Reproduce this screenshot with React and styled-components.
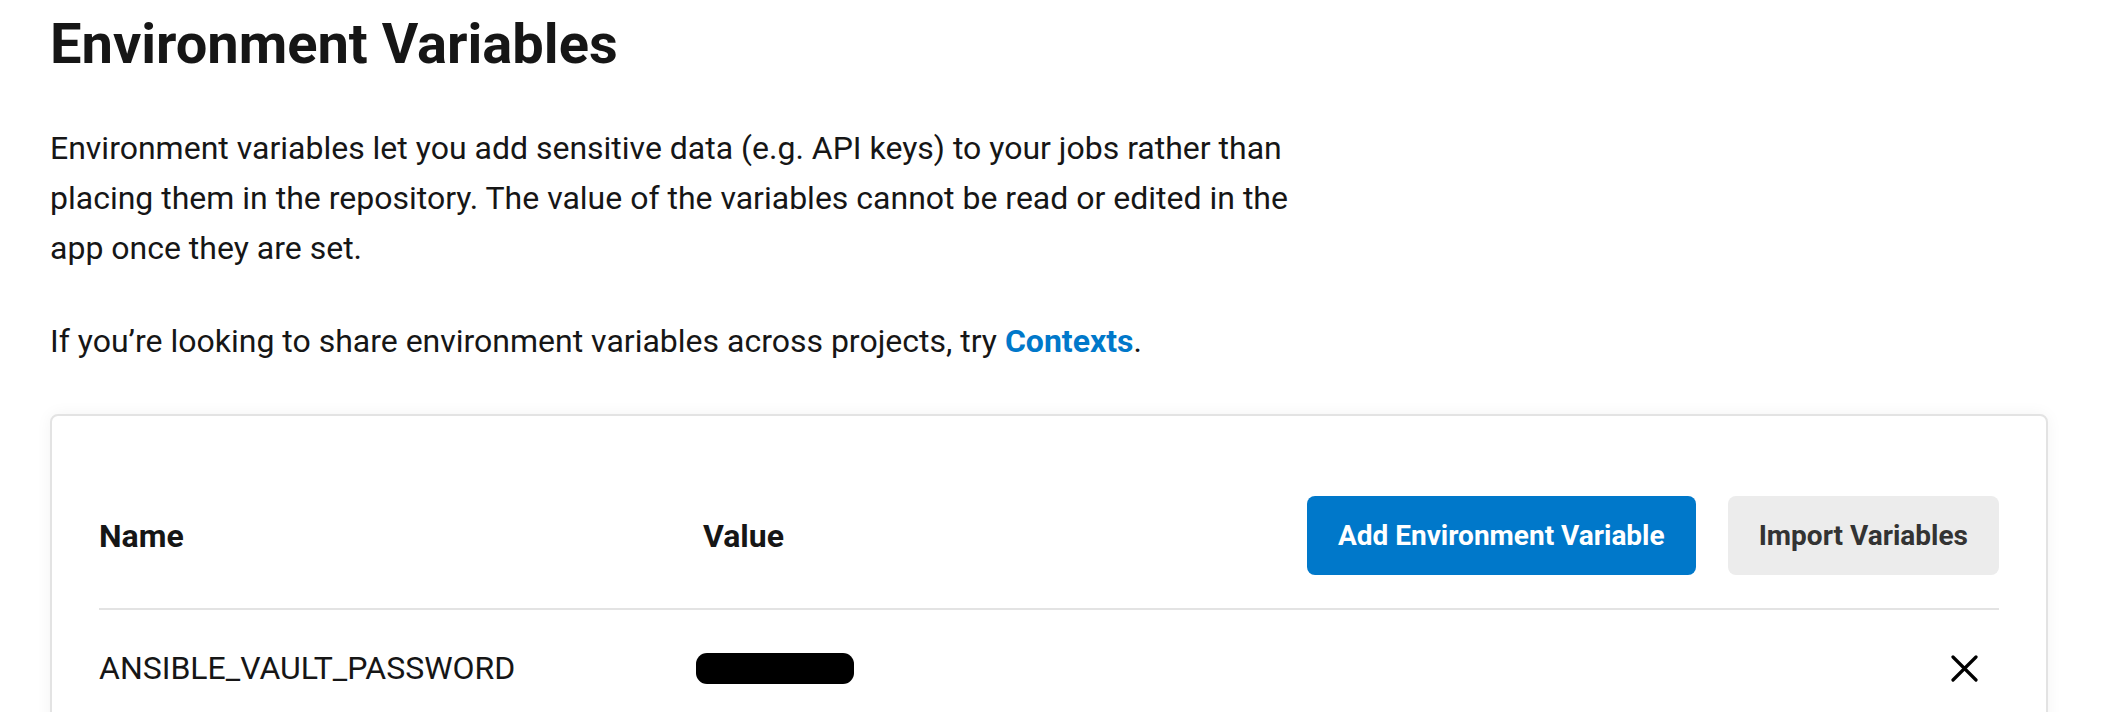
import React from 'react';
import styled, {createGlobalStyle} from 'styled-components';

const GlobalStyle = createGlobalStyle`
  html, body {
    margin: 0;
    padding: 0;
    background: #ffffff;
  }
  body {
    font-family: Roboto, "Liberation Sans", Arial, sans-serif;
    color: #161616;
  }
`;

const variables = [
    {name: 'ANSIBLE_VAULT_PASSWORD'}
];

const CloseIcon = () => (
    <svg width="27" height="27" viewBox="0 0 27 27" fill="none">
        <path d="M2 2L25 25M25 2L2 25" stroke="#000" strokeWidth="3.2" strokeLinecap="round"/>
    </svg>
);

export default function App() {
    return (
        <Page>
            <GlobalStyle/>
            <Title>Environment Variables</Title>
            <Paragraph>
                Environment variables let you add sensitive data (e.g. API keys) to your jobs rather than
                placing them in the repository. The value of the variables cannot be read or edited in the
                app once they are set.
            </Paragraph>
            <Paragraph spaced>
                If you’re looking to share environment variables across projects, try <Link href="#">Contexts</Link>.
            </Paragraph>
            <Card>
                <HeaderRow>
                    <HeadCell>Name</HeadCell>
                    <HeadCell>Value</HeadCell>
                    <Actions>
                        <Button primary>Add Environment Variable</Button>
                        <Button>Import Variables</Button>
                    </Actions>
                </HeaderRow>
                {variables.map((item) => (
                    <Row key={item.name}>
                        <Cell>{item.name}</Cell>
                        <Cell><Redacted/></Cell>
                        <DeleteButton aria-label="Delete"><CloseIcon/></DeleteButton>
                    </Row>
                ))}
            </Card>
        </Page>
    );
}

const Page = styled.div`
  padding: 11px 50px 0;
  width: 1998px;
`;

const Title = styled.h1`
  margin: 0;
  font-size: 56px;
  line-height: 66px;
  font-weight: 700;
  color: #161616;
`;

const Paragraph = styled.p`
  margin: ${props => props.spaced ? '43px' : '46px'} 0 0;
  width: 1260px;
  font-size: 32px;
  line-height: 50px;
  color: #161616;
`;

const Link = styled.a`
  color: #0078ca;
  font-weight: 700;
  text-decoration: none;
`;

const Card = styled.div`
  margin-top: 48px;
  width: 1998px;
  box-sizing: border-box;
  border: 2px solid #e3e3e3;
  border-radius: 8px;
  background: #ffffff;
  padding: 0 47px;
  box-shadow: 0 0 16px rgba(0, 0, 0, 0.05);
`;

const HeaderRow = styled.div`
  display: grid;
  grid-template-columns: 604px 1fr auto;
  align-items: center;
  padding: 80px 0 33px;
  border-bottom: 2px solid #e3e3e3;
`;

const HeadCell = styled.div`
  font-size: 32px;
  font-weight: 700;
  color: #161616;
`;

const Actions = styled.div`
  display: flex;
  gap: 32px;
`;

const Button = styled.button`
  height: 79px;
  padding: 0 31px;
  border: none;
  border-radius: 8px;
  font-family: Roboto, "Liberation Sans", Arial, sans-serif;
  font-size: 28px;
  font-weight: 700;
  background: ${props => props.primary ? '#0078ca' : '#ececec'};
  color: ${props => props.primary ? '#ffffff' : '#333333'};
  cursor: pointer;
`;

const Row = styled.div`
  display: grid;
  grid-template-columns: 604px 1fr auto;
  align-items: center;
  height: 116px;
`;

const Cell = styled.div`
  font-size: 32px;
  color: #161616;
  display: flex;
  align-items: center;
`;

const Redacted = styled.span`
  display: inline-block;
  width: 158px;
  height: 31px;
  margin-left: -7px;
  border-radius: 11px;
  background: #000000;
`;

const DeleteButton = styled.button`
  display: flex;
  align-items: center;
  justify-content: center;
  background: none;
  border: none;
  padding: 0;
  margin-right: 21px;
  cursor: pointer;
`;
